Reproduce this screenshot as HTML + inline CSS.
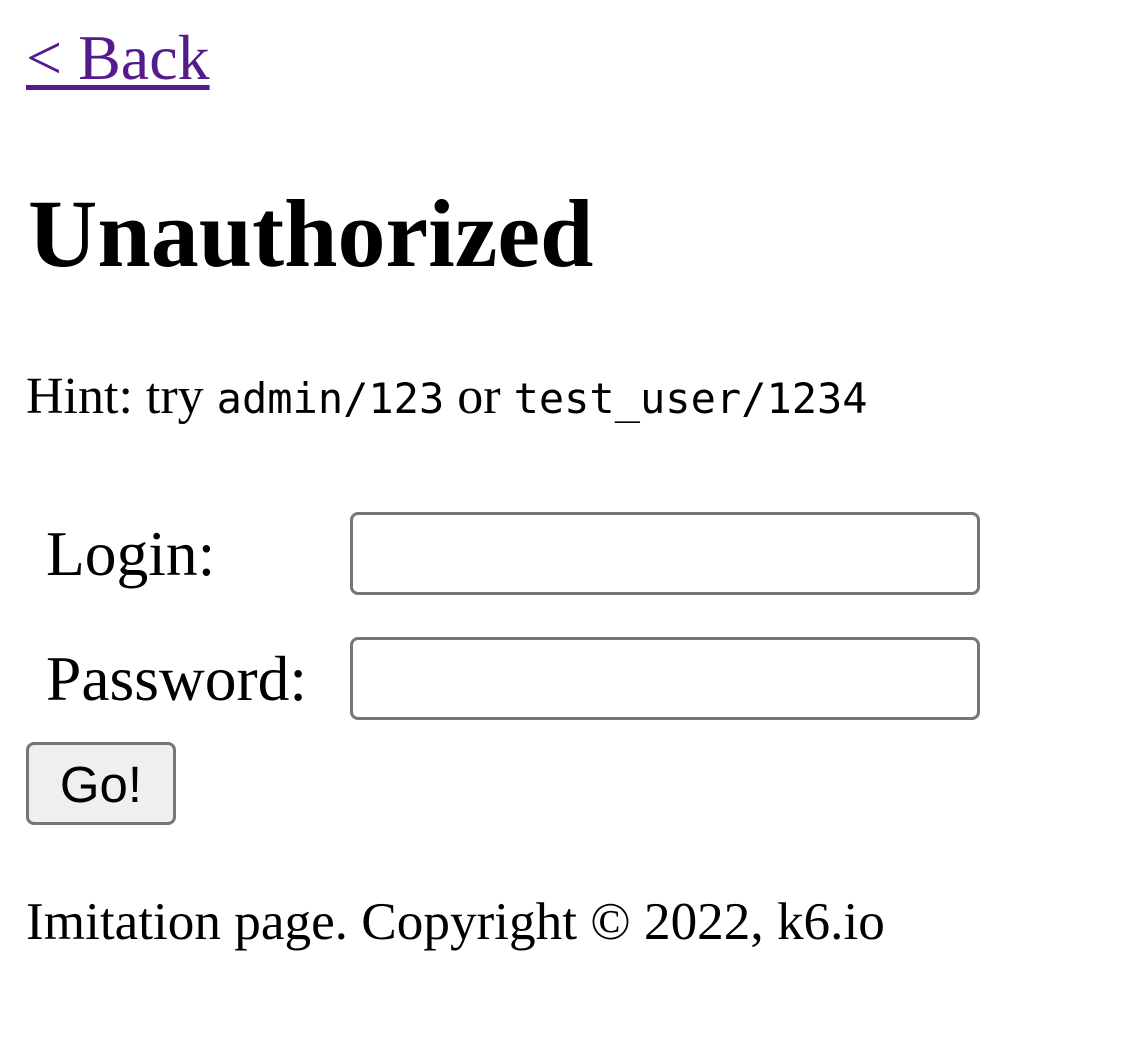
<!DOCTYPE html>
<html><head><meta charset="utf-8"><style>
html,body{margin:0;padding:0;background:#fff;width:1147px;height:1039px;overflow:hidden;position:relative}
.t{position:absolute;font-family:"Liberation Serif",serif;line-height:1;white-space:nowrap;color:#000}
.m{font-family:"DejaVu Sans Mono","Liberation Mono",monospace;font-size:42px}
a{color:#551a8b;text-decoration:underline;text-decoration-thickness:5px;text-underline-offset:6px}
.in{position:absolute;left:350px;width:624px;height:77px;border:3px solid #767676;border-radius:8px;box-sizing:content-box;width:624px}
.btn{position:absolute;left:26px;top:742px;width:144px;height:77px;border:3px solid #767676;border-radius:8px;background:#efefef;font-family:"Liberation Sans",sans-serif;font-size:51px;text-align:center;line-height:79px;color:#000}
</style></head><body>
<div class="t" style="left:26px;top:26px;font-size:64px"><a>&lt; Back</a></div>
<div class="t" style="left:28px;top:186px;font-size:96px;font-weight:bold">Unauthorized</div>
<div class="t" style="left:26px;top:371px;font-size:52px">Hint: try <span class="m">admin/123</span> or <span class="m">test_user/1234</span></div>
<div class="t" style="left:46px;top:522px;font-size:63.5px">Login:</div>
<div class="in" style="top:512px"></div>
<div class="t" style="left:46px;top:647px;font-size:63.5px">Password:</div>
<div class="in" style="top:637px"></div>
<div class="btn">Go!</div>
<div class="t" style="left:26px;top:895px;font-size:53.2px">Imitation page. Copyright © 2022, k6.io</div>
</body></html>
